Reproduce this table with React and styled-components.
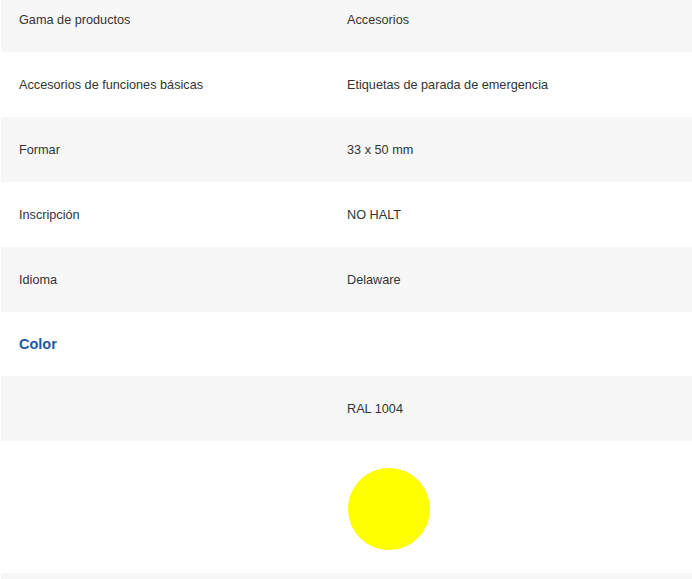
import styled, { createGlobalStyle } from 'styled-components';

const GlobalStyle = createGlobalStyle`
	html, body {
		margin: 0;
		padding: 0;
		background: #ffffff;
	}
	body {
		font-family: 'Liberation Sans', Arial, sans-serif;
		color: #333333;
	}
`;

const specs = [
	['Gama de productos', 'Accesorios'],
	['Accesorios de funciones básicas', 'Etiquetas de parada de emergencia'],
	['Formar', '33 x 50 mm'],
	['Inscripción', 'NO HALT'],
	['Idioma', 'Delaware'],
];

export default function App() {
	return (
		<>
			<GlobalStyle />
			<Table>
				{specs.map(([label, value], i) => (
					<Row key={label} $shaded={i % 2 === 0}>
						<Label>{label}</Label>
						<Value>{value}</Value>
					</Row>
				))}
				<Row $height={64}>
					<Heading>Color</Heading>
				</Row>
				<Row $shaded>
					<Label />
					<Value>RAL 1004</Value>
				</Row>
				<SwatchRow>
					<Label />
					<Value>
						<Swatch $color="#ffff00" />
					</Value>
				</SwatchRow>
				<Row $shaded />
			</Table>
		</>
	);
}

const Table = styled.div`
	margin-top: -13px;
	margin-left: 1px;
	display: flex;
	flex-direction: column;
`;
const Row = styled.div`
	display: grid;
	grid-template-columns: 328px 1fr;
	align-items: center;
	box-sizing: border-box;
	height: ${(props) => props.$height || 65}px;
	background-color: ${(props) => (props.$shaded ? '#f7f7f7' : '#ffffff')};
	font-size: 12.7px;
	line-height: 16px;
`;
const SwatchRow = styled(Row)`
	height: 132px;
	align-items: start;
	padding-top: 27px;
`;
const Label = styled.div`
	padding-left: 18px;
`;
const Value = styled.div`
	display: flex;
	align-items: center;
	padding-left: 18px;
`;
const Heading = styled.h4`
	margin: 0;
	padding-left: 18px;
	font-size: 14.5px;
	font-weight: bold;
	color: #1d5aa3;
`;
const Swatch = styled.span`
	display: block;
	width: 82px;
	height: 82px;
	margin-left: 1px;
	border-radius: 50%;
	background-color: ${(props) => props.$color};
`;
